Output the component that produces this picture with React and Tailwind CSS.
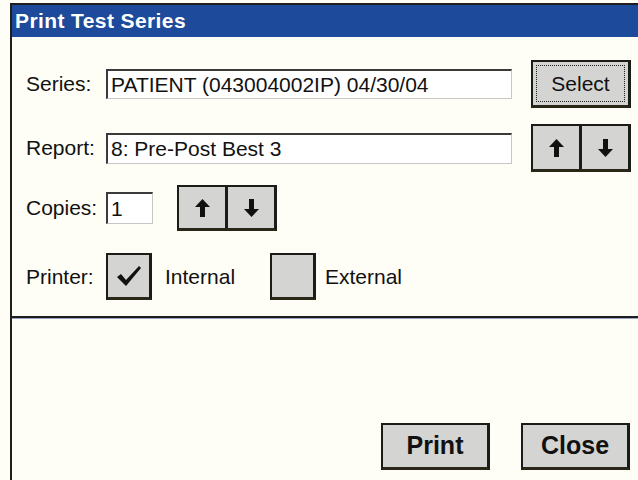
import React from 'react';

const FONT = { fontFamily: '"Liberation Sans", Arial, sans-serif' };

// raised gray face with a heavy dark outline, like the CE-style push buttons
const btn = 'bg-[#d4d4d2] border-2 border-[#1b1b18] border-r-[3px] border-b-[3px] border-b-[#2a2718] flex items-center justify-center';

function Field({ value, className }) {
  return (
    <div className={`bg-white border-t-2 border-l-2 border-[#3a3a3a] border-r border-b border-r-[#c6c6c6] border-b-[#c6c6c6] flex items-center pl-[3px] text-[21px] text-[#111] overflow-hidden whitespace-nowrap ${className}`}>
      {value}
    </div>
  );
}

function Arrow({ down }) {
  return (
    <svg width="15" height="18" viewBox="0 0 15 18" style={{ transform: down ? 'rotate(180deg)' : undefined }}>
      <path d="M7.5 0 L15 8 L10 8 L10 18 L5 18 L5 8 L0 8 Z" fill="#111" />
    </svg>
  );
}

function Spinner({ className }) {
  return (
    <div className={`flex border-2 border-[#1b1b18] border-r-[3px] border-b-[3px] border-b-[#2a2718] ${className}`}>
      <div className="flex-1 bg-[#d4d4d2] border-r-[3px] border-[#1b1b18] flex items-center justify-center">
        <Arrow />
      </div>
      <div className="flex-1 bg-[#d4d4d2] flex items-center justify-center">
        <Arrow down />
      </div>
    </div>
  );
}

function Check({ checked }) {
  return (
    <div className={`${btn} w-[46px] h-[47px]`}>
      {checked && (
        <svg width="26" height="22" viewBox="0 0 26 22">
          <path d="M1 12 L5 9 L10 15 L23 1 L25 3 L10 21 Z" fill="#111" />
        </svg>
      )}
    </div>
  );
}

export default function App() {
  return (
    <div className="w-[638px] h-[480px] bg-[#fefdf6] pt-[3px] pl-[10px] overflow-hidden" style={FONT}>
      <div className="h-full border-t-2 border-l-2 border-[#1e1e1e] flex flex-col">
        <div className="h-[32px] bg-[#1d4a9a] flex items-center pl-[3px] text-white font-bold text-[21px] tracking-[0.4px]">
          Print Test Series
        </div>

        {/* series */}
        <div className="mt-[23px] h-[48px] flex items-center">
          <span className="ml-[14px] w-[80px] text-[21px] text-[#111]">Series:</span>
          <Field value="PATIENT (043004002IP) 04/30/04" className="w-[406px] h-[30px]" />
          <div className={`${btn} ml-[19px] w-[100px] h-[48px] p-[3px]`}>
            <div className="w-full h-full border border-dotted border-[#222] flex items-center justify-center text-[21px] text-[#111]">
              Select
            </div>
          </div>
        </div>

        {/* report */}
        <div className="mt-[16px] h-[48px] flex items-center">
          <span className="ml-[14px] w-[80px] text-[21px] text-[#111]">Report:</span>
          <Field value="8: Pre-Post Best 3" className="w-[406px] h-[31px]" />
          <Spinner className="ml-[19px] w-[100px] h-[48px]" />
        </div>

        {/* copies */}
        <div className="mt-[13px] h-[46px] flex items-center">
          <span className="ml-[14px] w-[80px] text-[21px] text-[#111]">Copies:</span>
          <Field value="1" className="w-[47px] h-[32px]" />
          <Spinner className="ml-[24px] w-[100px] h-[46px]" />
        </div>

        {/* printer */}
        <div className="mt-[22px] h-[47px] flex items-center">
          <span className="ml-[14px] w-[80px] text-[21px] text-[#111]">Printer:</span>
          <Check checked />
          <span className="ml-[13px] w-[105px] text-[21px] text-[#111]">Internal</span>
          <Check />
          <span className="ml-[9px] text-[21px] text-[#111]">External</span>
        </div>

        <div className="mt-[16px] h-[2px] bg-[#1e1e1e]" />
        <div className="h-[1px] bg-[#9aa6c8]" />

        <div className="mt-[104px] flex justify-end gap-[31px] pr-[8px]">
          <div className={`${btn} w-[109px] h-[47px] text-[25px] font-bold text-[#111]`}>Print</div>
          <div className={`${btn} w-[109px] h-[47px] text-[25px] font-bold text-[#111]`}>Close</div>
        </div>
      </div>
    </div>
  );
}
